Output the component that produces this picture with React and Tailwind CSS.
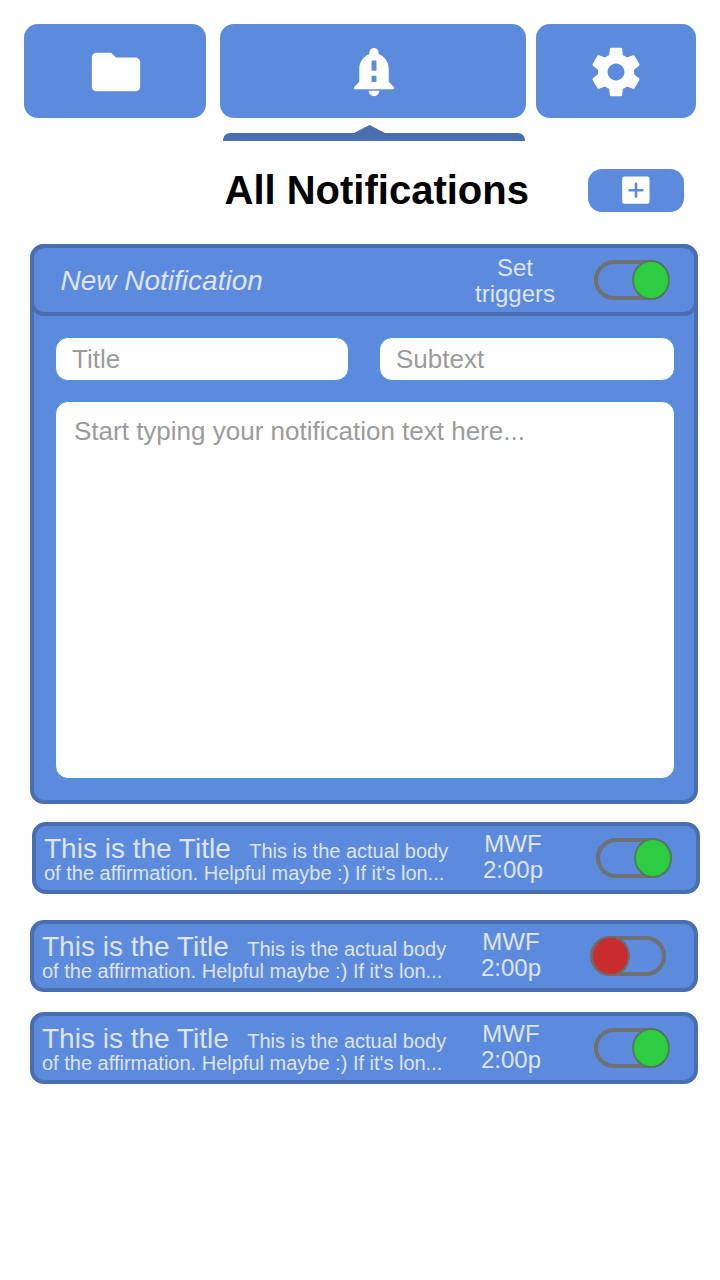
const notifications = [
  { id: 1, on: true, card: "ml-[2px]", toggle: "left-[560px]" },
  { id: 2, on: false, card: "mt-[26px]", toggle: "left-[556px]" },
  { id: 3, on: true, card: "mt-5", toggle: "left-[560px]" },
];

function FolderIcon() {
  return (
    <svg viewBox="0 0 24 24" className="relative left-px top-px size-[58px]" fill="#fff">
      <path d="M10 4H4c-1.1 0-1.99.9-1.99 2L2 18c0 1.1.9 2 2 2h16c1.1 0 2-.9 2-2V8c0-1.1-.9-2-2-2h-8l-2-2z" />
    </svg>
  );
}

function BellIcon() {
  return (
    <svg viewBox="0 0 24 24" className="relative left-px top-px size-[58px]" fill="#fff">
      <path
        fillRule="evenodd"
        d="M18.1 16v-5c0-3-1.6-5.400-4.200-6.400V4c0-1.100-.8-1.900-1.900-1.900s-1.900.8-1.900 1.900v.6C7.500 5.600 5.900 8 5.900 11v5l-2.100 2.200v.9h16.400v-.9L18.100 16zM13 16.100h-2v-2.600h2v2.600zm0-4.600h-2V7.200h2v4.300z"
      />
      <path d="M12 22c1.200 0 2.200-.9 2.200-2.200H9.800C9.800 21.100 10.800 22 12 22z" />
    </svg>
  );
}

function GearIcon() {
  return (
    <svg viewBox="0 0 24 24" className="relative top-px size-[58px]" fill="#fff">
      <path d="M19.43 12.98c.04-.32.07-.64.07-.98s-.03-.66-.07-.98l2.11-1.65c.19-.15.24-.42.12-.64l-2-3.46c-.12-.22-.39-.3-.61-.22l-2.49 1c-.52-.4-1.08-.73-1.69-.98l-.38-2.65C14.46 2.18 14.25 2 14 2h-4c-.25 0-.46.18-.49.42l-.38 2.65c-.61.25-1.17.59-1.69.98l-2.49-1c-.23-.09-.49 0-.61.22l-2 3.46c-.13.22-.07.49.12.64l2.11 1.65c-.04.32-.07.65-.07.98s.03.66.07.98l-2.11 1.65c-.19.15-.24.42-.12.64l2 3.46c.12.22.39.3.61.22l2.49-1c.52.4 1.08.73 1.69.98l.38 2.65c.03.24.24.42.49.42h4c.25 0 .46-.18.49-.42l.38-2.65c.61-.25 1.17-.59 1.69-.98l2.49 1c.23.09.49 0 .61-.22l2-3.46c.12-.22.07-.49-.12-.64l-2.11-1.65zM12 15.5c-1.93 0-3.5-1.57-3.5-3.5s1.57-3.5 3.5-3.5 3.5 1.57 3.5 3.5-1.57 3.5-3.5 3.5z" />
    </svg>
  );
}

function AddIcon() {
  return (
    <svg viewBox="0 0 24 24" className="relative -top-px size-9">
      <rect x="2.800" y="3" width="18.200" height="18.200" rx="1.600" fill="#fff" />
      <path d="M12 7.800v8.600M7.700 12.100h8.600" stroke="#5c8bde" strokeWidth="1.700" strokeLinecap="round" />
    </svg>
  );
}

function Toggle({ on, className }) {
  return (
    <button
      type="button"
      role="switch"
      aria-checked={on}
      className={`absolute top-3 h-10 w-[76px] rounded-full border-4 border-[#6e7071] ${className}`}
    >
      <span
        className={
          on
            ? "absolute -right-1 -top-1 h-10 w-[38px] rounded-[50%] border-2 border-[#54795f] bg-[#2dcb40]"
            : "absolute -left-[3px] -top-1 h-10 w-[39px] rounded-[50%] border-2 border-[#75686b] bg-[#c92c2c]"
        }
      />
    </button>
  );
}

function Schedule({ first, second }) {
  return (
    <div className="w-[108px] text-center text-[24px] leading-[26px]">
      {first}
      <br />
      {second}
    </div>
  );
}

function NotificationRow({ item }) {
  return (
    <article
      className={`relative flex h-[72px] w-[668px] items-start rounded-[14px] border-4 border-[#4a6fb0] bg-[#5c8bde] text-[#dee4f0] ${item.card}`}
    >
      <div className="w-[423px] pl-2 whitespace-nowrap">
        <div className="flex h-9 items-baseline pt-[5px] leading-[36px]">
          <span className="text-[28px]">This is the Title</span>
          <span className="ml-[18.5px] text-[20px]">This is the actual body</span>
        </div>
        <div className="text-[20px] leading-[22px]">of the affirmation. Helpful maybe :) If it's lon...</div>
      </div>
      <div className="pt-[5px]">
        <Schedule first="MWF" second="2:00p" />
      </div>
      <Toggle on={item.on} className={item.toggle} />
    </article>
  );
}

const field =
  "rounded-[13px] border border-[#4593da] bg-white text-[26px] text-[#9b9b9b] placeholder:text-[#9b9b9b] placeholder:opacity-100 outline-none";

export default function App() {
  return (
    <div className="h-[1280px] w-[720px] overflow-hidden bg-white font-['Liberation_Sans',Arial,sans-serif]">
      <nav className="flex h-[118px] pl-6 pt-6 text-white">
        <button type="button" aria-label="Files" className="flex h-[94px] w-[182px] items-center justify-center rounded-[14px] bg-[#5c8bde]">
          <FolderIcon />
        </button>
        <button type="button" aria-label="Notifications" className="ml-[14px] flex h-[94px] w-[306px] items-center justify-center rounded-[14px] bg-[#5c8bde]">
          <BellIcon />
        </button>
        <button type="button" aria-label="Settings" className="ml-[10px] flex h-[94px] w-[160px] items-center justify-center rounded-[14px] bg-[#5c8bde]">
          <GearIcon />
        </button>
      </nav>
      <div className="ml-[223px] mt-[7px] flex w-[302px] flex-col">
        <div className="ml-[131px] h-2 w-[31px] bg-[#4a6fb0] [clip-path:polygon(50%_0,100%_100%,0_100%)]" />
        <div className="h-2 rounded-t-[7px] bg-[#4a6fb0]" />
      </div>
      <header className="flex h-[103px] items-start pl-[224.5px] pt-[28px]">
        <h1 className="-mt-px w-[363px] whitespace-nowrap text-[40px] font-bold leading-[44px] text-black">All Notifications</h1>
        <button type="button" aria-label="Add notification" className="flex h-[43px] w-24 items-center justify-center rounded-[14px] bg-[#5c8bde]">
          <AddIcon />
        </button>
      </header>
      <main className="ml-[30px]">
        <section className="relative h-[560px] w-[668px] rounded-[14px] border-4 border-[#4a6fb0] bg-[#5c8bde]">
          <div className="-ml-1 -mt-1 flex h-[72px] w-[668px] rounded-[14px] border-4 border-[#4a6fb0] text-[#dee4f0]">
            <h2 className="w-[427px] pl-[26.5px] text-[28px] italic leading-[66px]">New Notification</h2>
            <div className="pt-[7px]">
              <Schedule first="Set" second="triggers" />
            </div>
          </div>
          <Toggle on className="left-[560px]" />
          <div className="mt-[21px] flex pl-[21px]">
            <input aria-label="Title" placeholder="Title" className={`h-11 w-[294px] px-4 ${field}`} />
            <input aria-label="Subtext" placeholder="Subtext" className={`ml-[30px] h-11 w-[296px] px-4 ${field}`} />
          </div>
          <textarea
            aria-label="Notification text"
            placeholder="Start typing your notification text here..."
            className={`ml-[21px] mt-5 block h-[378px] w-[620px] resize-none px-[18px] pt-[14px] leading-[30px] ${field}`}
          />
        </section>
        <section className="mt-[18px]">
          {notifications.map((item) => (
            <NotificationRow key={item.id} item={item} />
          ))}
        </section>
      </main>
    </div>
  );
}
